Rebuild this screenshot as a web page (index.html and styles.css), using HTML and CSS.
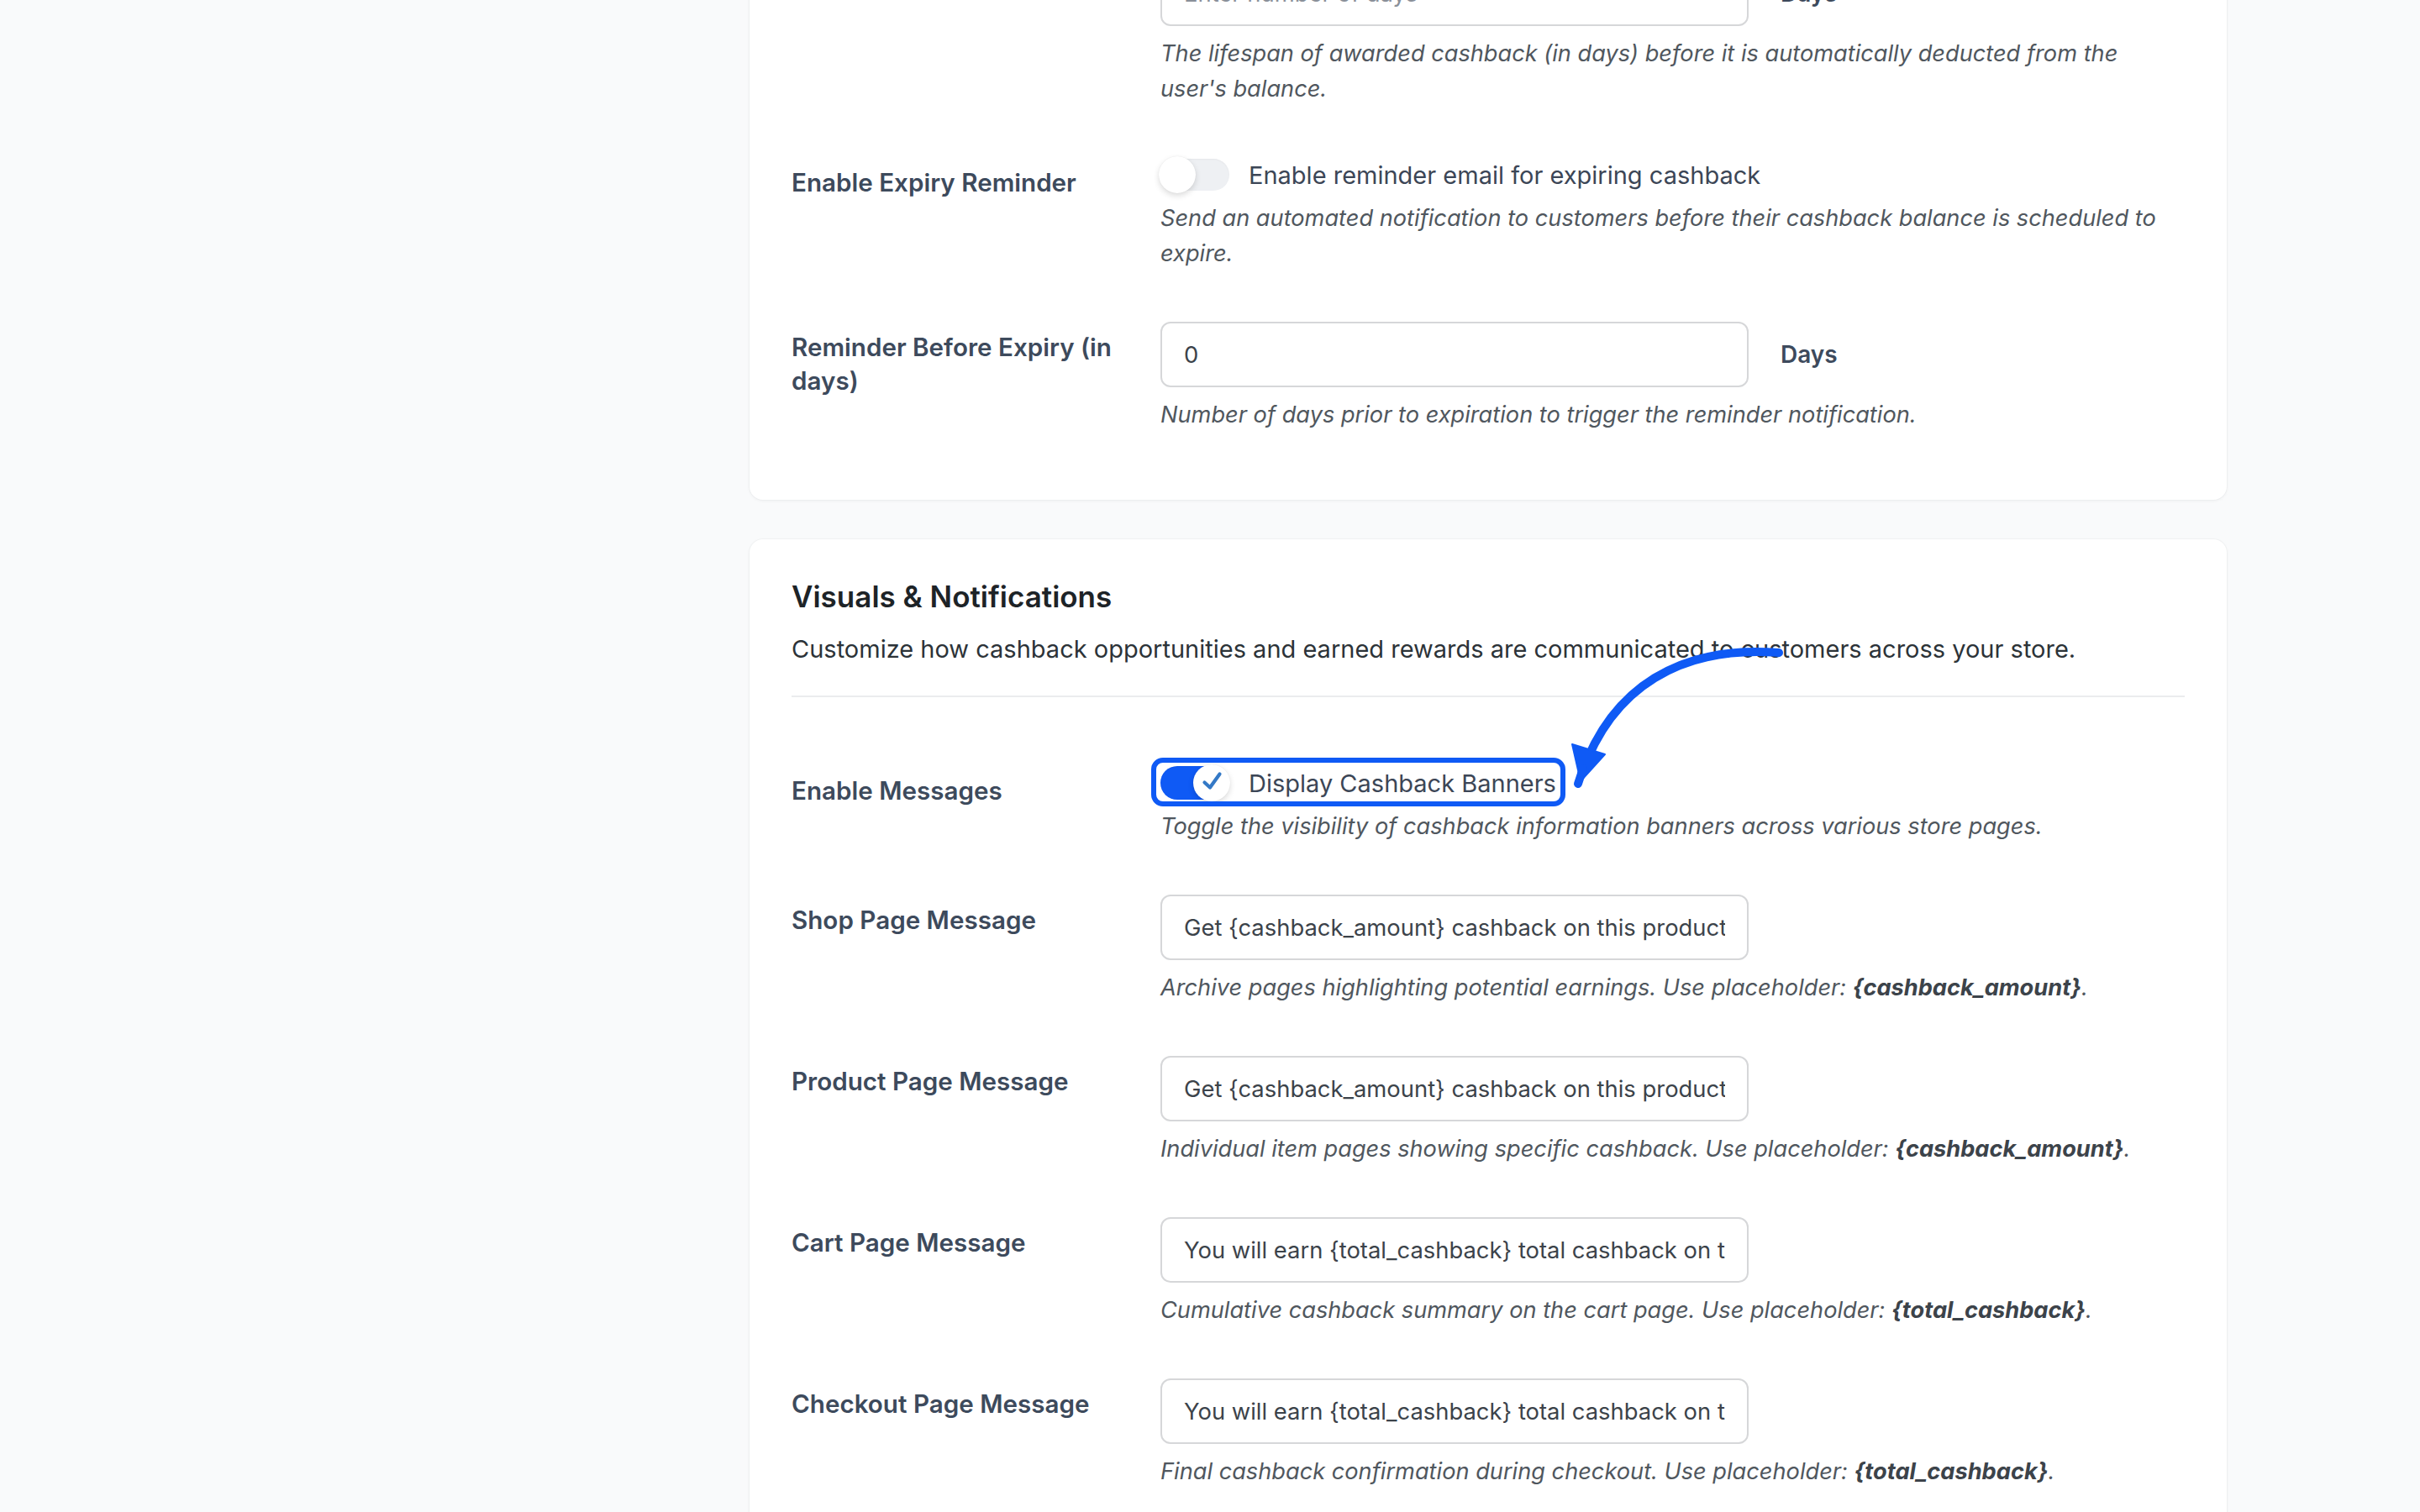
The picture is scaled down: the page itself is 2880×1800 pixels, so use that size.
FILE: index.html
```html
<!DOCTYPE html>
<html lang="en">
<head>
<meta charset="utf-8">
<title>Cashback Settings</title>
<link rel="stylesheet" href="styles.css">
</head>
<body>
<main class="page">
  <section class="card card-first">
    <div class="row">
      <div class="label">Cashback Expiry Period</div>
      <div class="control">
        <div class="inline">
          <input class="text" type="text" placeholder="Enter number of days">
          <span class="unit">Days</span>
        </div>
        <p class="help">The lifespan of awarded cashback (in days) before it is automatically deducted from the user's balance.</p>
      </div>
    </div>
    <div class="row">
      <div class="label">Enable Expiry Reminder</div>
      <div class="control">
        <div class="toggle-line">
          <span class="switch"><span class="knob"></span></span>
          <span class="toggle-text">Enable reminder email for expiring cashback</span>
        </div>
        <p class="help help-toggle">Send an automated notification to customers before their cashback balance is scheduled to expire.</p>
      </div>
    </div>
    <div class="row">
      <div class="label">Reminder Before Expiry (in days)</div>
      <div class="control">
        <div class="inline">
          <input class="text" type="text" value="0">
          <span class="unit">Days</span>
        </div>
        <p class="help">Number of days prior to expiration to trigger the reminder notification.</p>
      </div>
    </div>
  </section>

  <section class="card card-second">
    <h2 class="card-title">Visuals &amp; Notifications</h2>
    <p class="intro">Customize how cashback opportunities and earned rewards are communicated to customers across your store.</p>
    <hr class="divider">
    <div class="rows">
      <div class="row">
        <div class="label">Enable Messages</div>
        <div class="control">
          <div class="toggle-line highlight">
            <span class="switch on"><span class="knob"><svg class="check" viewBox="0 0 44 44" width="44" height="44"><path d="M13.5 21.5 L20 27.5 L31.5 11.5" fill="none" stroke="#3479c6" stroke-width="4.2" stroke-linecap="round" stroke-linejoin="round"/></svg></span></span>
            <span class="toggle-text">Display Cashback Banners</span>
          </div>
          <p class="help help-toggle">Toggle the visibility of cashback information banners across various store pages.</p>
        </div>
      </div>
      <div class="row">
        <div class="label">Shop Page Message</div>
        <div class="control">
          <input class="text" type="text" value="Get {cashback_amount} cashback on this product.">
          <p class="help">Archive pages highlighting potential earnings. Use placeholder: <b>{cashback_amount}</b>.</p>
        </div>
      </div>
      <div class="row">
        <div class="label">Product Page Message</div>
        <div class="control">
          <input class="text" type="text" value="Get {cashback_amount} cashback on this product.">
          <p class="help">Individual item pages showing specific cashback. Use placeholder: <b>{cashback_amount}</b>.</p>
        </div>
      </div>
      <div class="row">
        <div class="label">Cart Page Message</div>
        <div class="control">
          <input class="text" type="text" value="You will earn {total_cashback} total cashback on this order.">
          <p class="help">Cumulative cashback summary on the cart page. Use placeholder: <b>{total_cashback}</b>.</p>
        </div>
      </div>
      <div class="row">
        <div class="label">Checkout Page Message</div>
        <div class="control">
          <input class="text" type="text" value="You will earn {total_cashback} total cashback on this order.">
          <p class="help">Final cashback confirmation during checkout. Use placeholder: <b>{total_cashback}</b>.</p>
        </div>
      </div>
    </div>
  </section>
</main>

<svg class="arrow" width="2880" height="1800" viewBox="0 0 2880 1800" aria-hidden="true">
  <path d="M2117 777 C2000 768 1918 818 1882 922" fill="none" stroke="#0f5af5" stroke-width="10" stroke-linecap="round"/>
  <polygon points="1871,886 1910,898 1881,930" fill="#0f5af5" stroke="#0f5af5" stroke-width="2" stroke-linejoin="round"/>
  <path d="M1884 915 L1878 933" stroke="#0f5af5" stroke-width="10" stroke-linecap="round"/>
</svg>
</body>
</html>
```

FILE: styles.css
```css
html, body {
  margin: 0;
  padding: 0;
}

body {
  background: #f9fafb;
  font-family: Inter, "Noto Sans", "Liberation Sans", sans-serif;
  color: #2c3338;
  height: 1800px;
  overflow: hidden;
  position: relative;
}

.page {
  margin-left: 892px;
  width: 1758px;
  display: flex;
  flex-direction: column;
  gap: 47px;
}

.card {
  background: #ffffff;
  border-radius: 16px;
  box-shadow: 0 1px 4px rgba(16, 24, 40, 0.05), 0 0 0 1px rgba(16, 24, 40, 0.025);
  padding: 50px;
}

.card-first {
  margin-top: -127px;
}

.card-second {
  padding-top: 46px;
}

.card-title {
  margin: 0;
  font-size: 35px;
  line-height: 44px;
  font-weight: 600;
  color: #1d2327;
}

.intro {
  margin: 19px 0 0;
  font-size: 29px;
  line-height: 44px;
  color: #2c3338;
}

.divider {
  margin: 33px 0 51px;
  border: 0;
  height: 2px;
  background: #ebecee;
}

.row {
  display: grid;
  grid-template-columns: 400px 1fr;
  column-gap: 39px;
}

.label {
  padding: 40px 0;
  font-size: 29.6px;
  line-height: 40px;
  font-weight: 600;
  color: #3d4a5c;
}

.control {
  padding: 30px 20px 30px 0;
}

.inline {
  display: flex;
  align-items: center;
  gap: 38px;
}

.text {
  display: block;
  width: 700px;
  height: 78px;
  box-sizing: border-box;
  border: 2px solid #d6d7d9;
  border-radius: 12px;
  padding: 0 26px;
  font-family: Inter, "Noto Sans", sans-serif;
  font-size: 27.4px;
  color: #3c434a;
  background: #fff;
  outline: none;
}

.text::placeholder {
  color: #8a9099;
}

.unit {
  font-size: 28px;
  font-weight: 600;
  color: #3d4a5c;
}

.help {
  margin: 12px 0 0;
  font-size: 27.2px;
  line-height: 42px;
  font-style: italic;
  color: #50575e;
}

.help b {
  font-weight: 700;
  color: #3c434a;
}

.help-toggle {
  margin-top: 10px;
}

.toggle-line {
  display: flex;
  align-items: center;
  gap: 23px;
  height: 42px;
  width: max-content;
}

.toggle-text {
  font-size: 29px;
  color: #3c4656;
}

.switch {
  position: relative;
  display: block;
  width: 82px;
  height: 38px;
  border-radius: 19px;
  background: #eef0f3;
  box-shadow: inset 0 1px 2px rgba(0, 0, 0, 0.04);
}

.switch .knob {
  position: absolute;
  top: -3px;
  left: -2px;
  width: 44px;
  height: 44px;
  border-radius: 50%;
  background: #ffffff;
  box-shadow: 0 3px 7px rgba(0, 0, 0, 0.14), 0 0 1px rgba(0, 0, 0, 0.1);
}

.switch.on {
  background: #0f5af5;
  height: 40px;
  border-radius: 20px;
}

.switch.on .knob {
  top: -2px;
  left: auto;
  right: -1px;
}

.check {
  display: block;
}

.highlight {
  position: relative;
}

.highlight::after {
  content: "";
  position: absolute;
  top: -9px;
  bottom: -7px;
  left: -11px;
  right: -11px;
  border: 6px solid #0f5af5;
  border-radius: 14px;
  pointer-events: none;
}

.arrow {
  position: absolute;
  left: 0;
  top: 0;
  pointer-events: none;
}
```
